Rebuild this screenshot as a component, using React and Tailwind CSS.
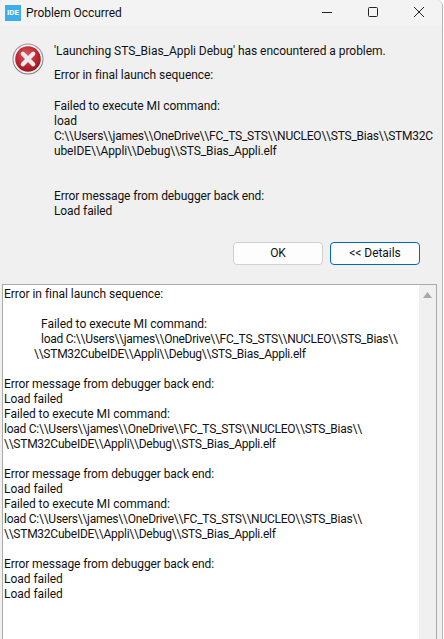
import React from "react";

const font = { fontFamily: 'Roboto, "Noto Sans", sans-serif' };

function ErrorIcon() {
  return (
    <svg width="32" height="32" viewBox="0 0 34 34" className="shrink-0">
      <defs>
        <radialGradient id="r" cx="45%" cy="35%" r="70%">
          <stop offset="0%" stopColor="#dd5a62" />
          <stop offset="60%" stopColor="#bb2630" />
          <stop offset="100%" stopColor="#8c1620" />
        </radialGradient>
        <linearGradient id="ring" x1="0" y1="0" x2="0" y2="1">
          <stop offset="0%" stopColor="#9a9a9a" />
          <stop offset="100%" stopColor="#7d7d7d" />
        </linearGradient>
      </defs>
      <circle cx="17" cy="17" r="16.5" fill="url(#ring)" />
      <circle cx="17" cy="17" r="15.4" fill="#f3f3f3" />
      <circle cx="17" cy="17" r="13.6" fill="url(#r)" />
      <path d="M11.5 11.5 L22.5 22.5 M22.5 11.5 L11.5 22.5" stroke="#ececec" strokeWidth="4.6" strokeLinecap="round" />
    </svg>
  );
}

function Line({ children, className = "" }) {
  return <div className={"h-[15px] whitespace-pre " + className}>{children || " "}</div>;
}

const load = "load C:\\\\Users\\\\james\\\\OneDrive\\\\FC_TS_STS\\\\NUCLEO\\\\STS_Bias\\\\";
const stm = "\\\\STM32CubeIDE\\\\Appli\\\\Debug\\\\STS_Bias_Appli.elf";

export default function App() {
  return (
    <div className="w-[444px] h-[639px] overflow-hidden bg-white">
      <div style={font} className="w-[443px] h-[639px] overflow-hidden rounded-tr-[6px] border-r border-[#b4b4b4] bg-[#f0f0f0] flex flex-col text-[12px] leading-[15px] tracking-[-0.04px] text-[#111]">
        <div className="h-[26px] shrink-0 bg-[#f3f3f3] flex items-center pl-[5px]">
          <div className="w-[16px] h-[16px] bg-[#3daee9] text-white text-[8px] font-bold flex items-center justify-center leading-none tracking-normal">IDE</div>
          <span className="ml-[5px] text-[12px]">Problem Occurred</span>
          <div className="ml-auto flex items-center pr-[17px] mb-[2px]">
            <svg width="12" height="12" viewBox="0 0 12 12" className="mr-[34px]"><path d="M1 6.5H11" stroke="#222" strokeWidth="1" /></svg>
            <svg width="12" height="12" viewBox="0 0 12 12" className="mr-[34px]"><rect x="1.5" y="1.5" width="9" height="9" rx="1" fill="none" stroke="#222" /></svg>
            <svg width="12" height="12" viewBox="0 0 12 12"><path d="M1 1L11 11M11 1L1 11" stroke="#222" strokeWidth="1" /></svg>
          </div>
        </div>
        <div className="flex shrink-0 pl-[12px] pt-[17px] h-[216px] items-start">
          <ErrorIcon />
          <div className="ml-[10px] pt-[1px]">
            <Line>'Launching STS_Bias_Appli Debug' has encountered a problem.</Line>
            <Line className="mt-[9px]">Error in final launch sequence:</Line>
            <Line className="mt-[16px]">Failed to execute MI command:</Line>
            <Line>load</Line>
            <Line className="tracking-[-0.23px]">C:\\Users\\james\\OneDrive\\FC_TS_STS\\NUCLEO\\STS_Bias\\STM32C</Line>
            <Line className="tracking-[-0.13px]">ubeIDE\\Appli\\Debug\\STS_Bias_Appli.elf</Line>
            <Line className="mt-[30px] tracking-[-0.1px]">Error message from debugger back end:</Line>
            <Line className="tracking-[-0.1px]">Load failed</Line>
          </div>
        </div>
        <div className="flex shrink-0 justify-end gap-[7px] pr-[22px] h-[42px]">
          <button className="w-[90px] h-[23px] bg-[#fdfdfd] border border-[#d0d0d0] rounded-[4px] text-[12px]">OK</button>
          <button className="w-[90px] h-[23px] bg-[#fdfdfd] border border-[#0067c0] rounded-[4px] text-[12px]">{"<< Details"}</button>
        </div>
        <div className="flex-1 flex min-h-0">
          <div className="ml-[2px] w-[435px] border border-[#ababab] border-b-0 bg-white flex min-h-0">
            <div className="flex-1 pl-[1px] pt-[2px]">
              <Line>Error in final launch sequence:</Line>
              <Line> </Line>
              <Line className="pl-[37px]">Failed to execute MI command:</Line>
              <Line className="pl-[37px] tracking-[-0.27px]">{load}</Line>
              <Line className="pl-[30px] tracking-[-0.25px]">{stm}</Line>
              <Line> </Line>
              <Line className="tracking-[-0.1px]">Error message from debugger back end:</Line>
              <Line>Load failed</Line>
              <Line>Failed to execute MI command:</Line>
              <Line className="tracking-[-0.25px]">{load}</Line>
              <Line className="tracking-[-0.25px]">{stm}</Line>
              <Line> </Line>
              <Line className="tracking-[-0.1px]">Error message from debugger back end:</Line>
              <Line>Load failed</Line>
              <Line>Failed to execute MI command:</Line>
              <Line className="tracking-[-0.25px]">{load}</Line>
              <Line className="tracking-[-0.25px]">{stm}</Line>
              <Line> </Line>
              <Line className="tracking-[-0.1px]">Error message from debugger back end:</Line>
              <Line>Load failed</Line>
              <Line>Load failed</Line>
            </div>
            <div className="w-[17px] bg-[#f0f0f0] flex justify-center pt-[7px]">
              <svg width="9" height="6" viewBox="0 0 9 6"><path d="M4.5 0L9 6H0Z" fill="#a8a8a8" /></svg>
            </div>
          </div>
        </div>
      </div>
    </div>
  );
}
